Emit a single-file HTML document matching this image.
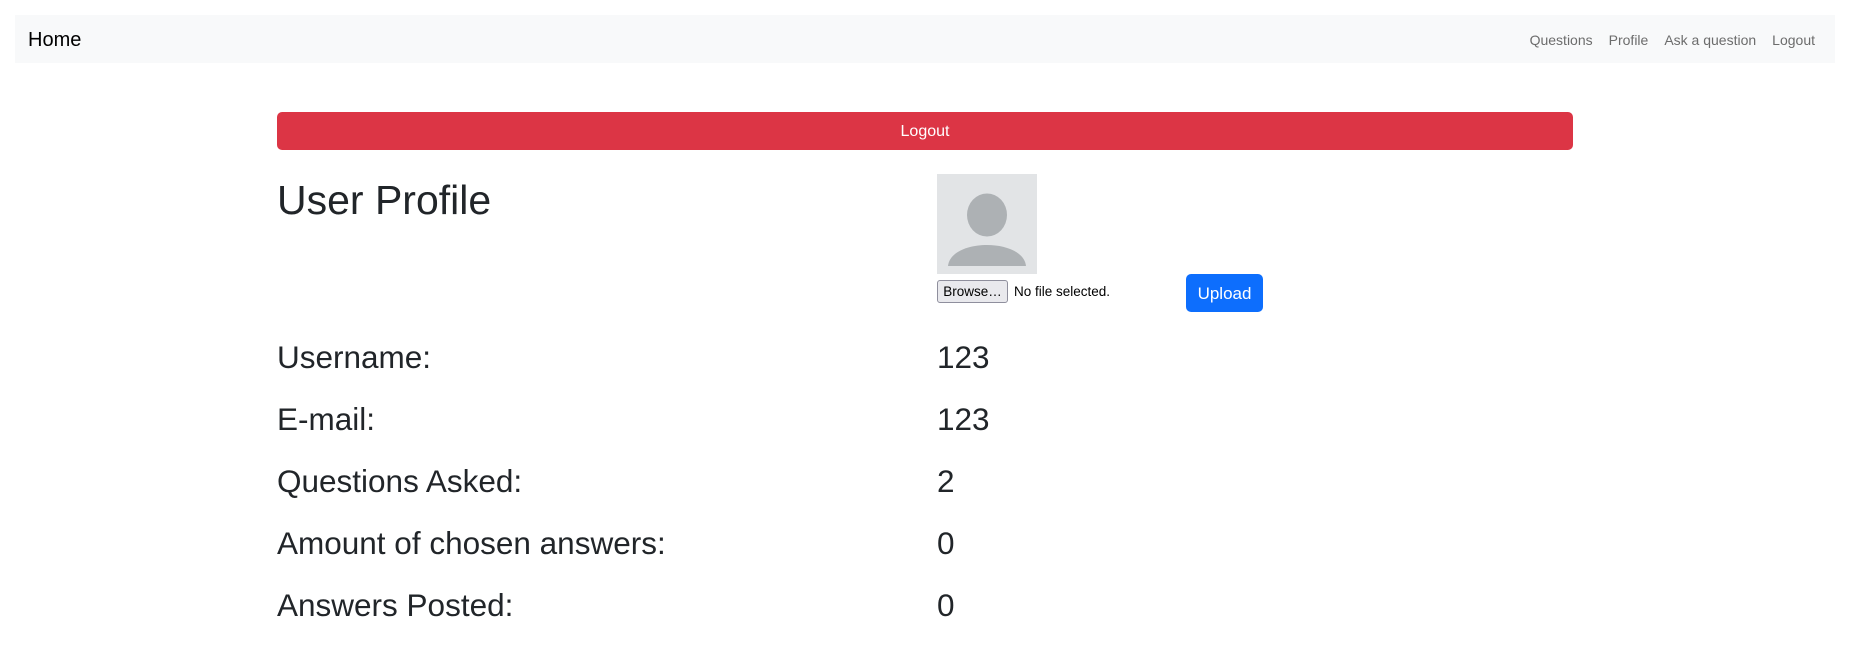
<!DOCTYPE html>
<html><head><meta charset="utf-8"><style>
*{box-sizing:border-box;margin:0;padding:0}
body{width:1862px;height:669px;background:#fff;font-family:"Liberation Sans",Arial,sans-serif;color:#212529;position:relative;overflow:hidden}
.nav{position:absolute;left:15px;top:15px;width:1820px;height:48px;background:#f8f9fa}
.brand{position:absolute;left:13px;top:13px;font-size:20px;line-height:24px;color:#000}
.links{position:absolute;right:20px;top:17px;font-size:14px;color:#6c6c6c;display:flex;gap:16px}
.btn-red{position:absolute;left:277px;top:112px;width:1296px;height:38px;background:#dc3545;border-radius:5px;color:#fff;font-size:16px;text-align:center;line-height:40px}
h1{position:absolute;left:277px;top:175px;font-size:41px;font-weight:400;line-height:50px}
.av{position:absolute;left:937px;top:174px;width:100px;height:100px;background:#e2e4e6}
.browse{position:absolute;left:937px;top:280px;width:71px;height:23px;border:1px solid #8f8f9d;border-radius:3px;background:#e9e9ed;font-size:13.5px;line-height:21px;text-align:center;color:#000}
.nf{position:absolute;left:1014px;top:284px;font-size:13.5px;color:#000}
.up{position:absolute;left:1186px;top:274px;width:77px;height:38px;background:#0d6efd;border-radius:5px;color:#fff;font-size:17px;line-height:40px;text-align:center}
.row{position:absolute;left:277px;font-size:31.5px;line-height:36px;width:1000px}
.row span{position:absolute;left:660px}
</style></head><body>
<div class="nav"><div class="brand">Home</div><div class="links"><span>Questions</span><span>Profile</span><span>Ask a question</span><span>Logout</span></div></div>
<div class="btn-red">Logout</div>
<h1>User Profile</h1>
<div class="av"><svg width="100" height="100" viewBox="0 0 100 100"><ellipse cx="50" cy="41" rx="20" ry="21.5" fill="#adb1b4"/><path d="M11 92 C14 64 86 64 89 92 Z" fill="#adb1b4"/></svg></div>
<div class="browse">Browse…</div><div class="nf">No file selected.</div>
<div class="up">Upload</div>
<div class="row" style="top:339px">Username:<span>123</span></div>
<div class="row" style="top:401px">E-mail:<span>123</span></div>
<div class="row" style="top:463px">Questions Asked:<span>2</span></div>
<div class="row" style="top:525px">Amount of chosen answers:<span>0</span></div>
<div class="row" style="top:587px">Answers Posted:<span>0</span></div>
</body></html>
